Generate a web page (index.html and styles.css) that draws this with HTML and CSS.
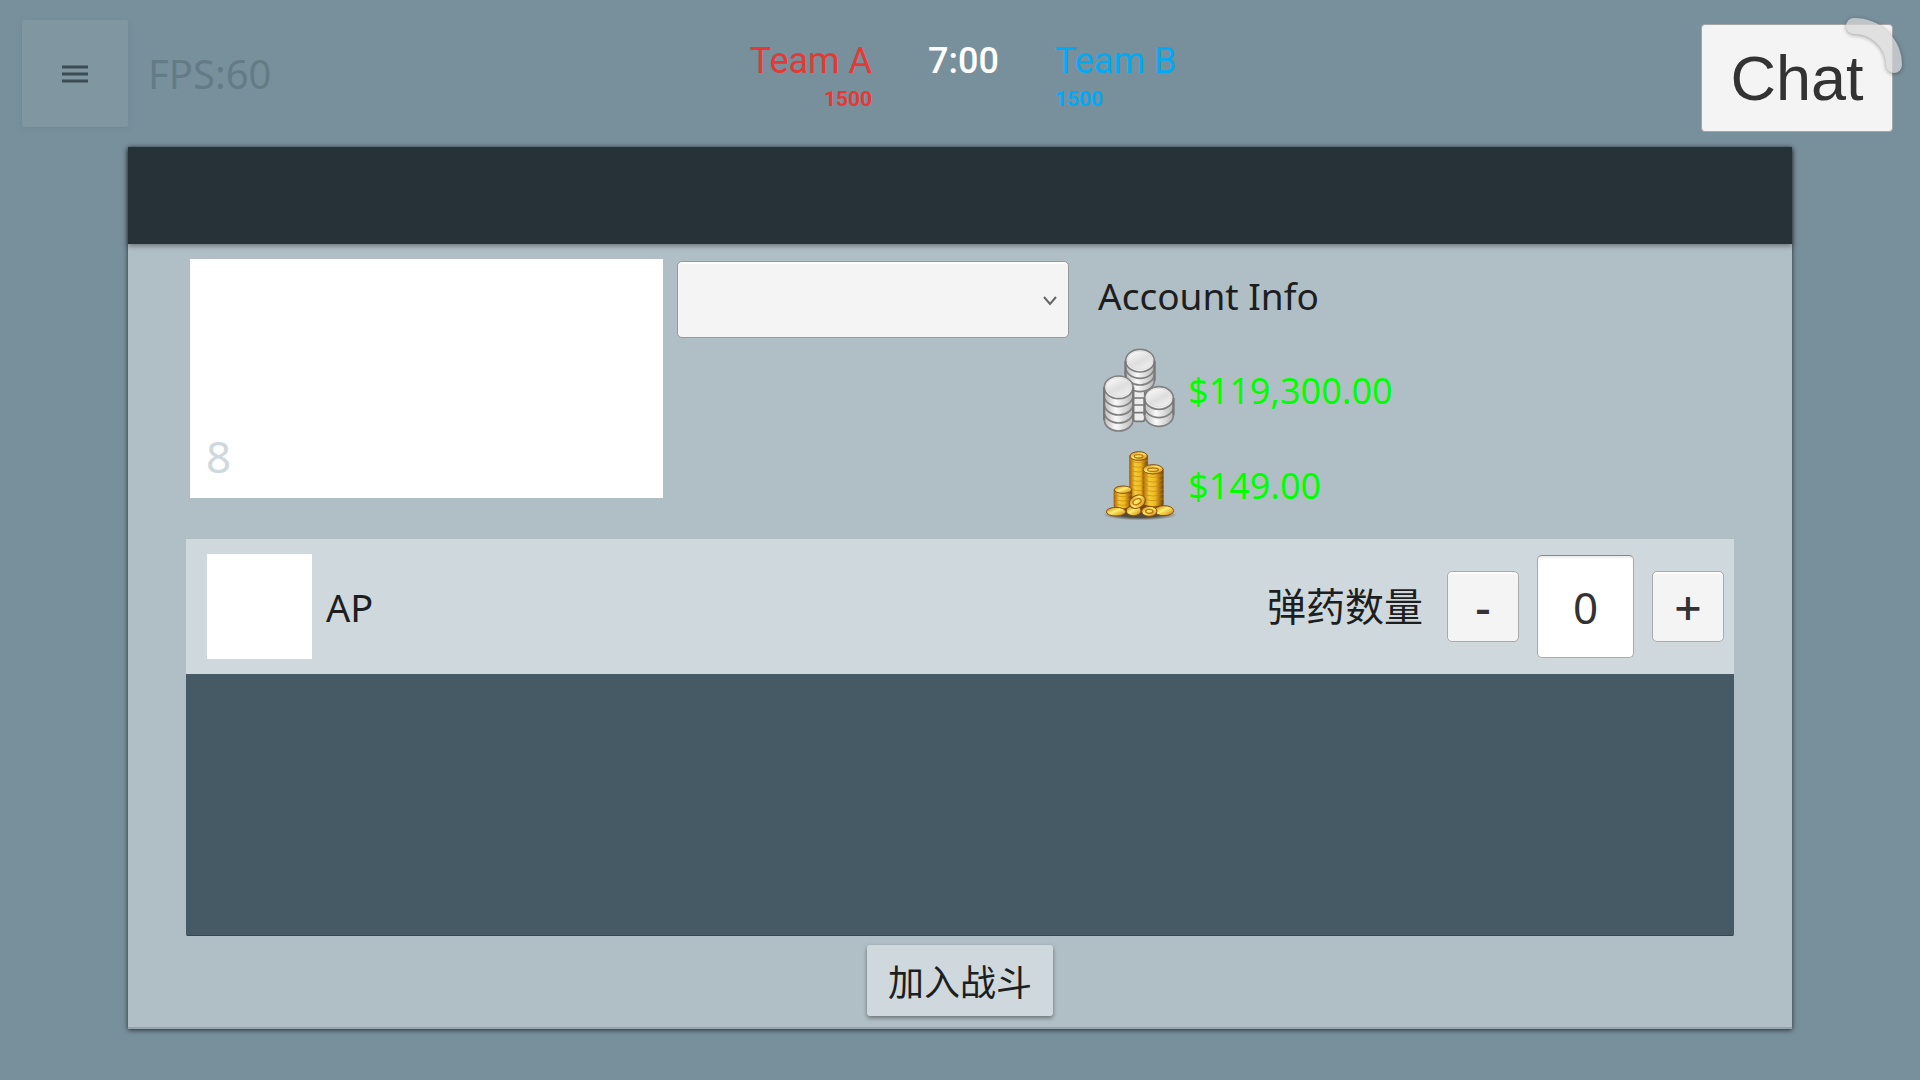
FILE: index.html
```html
<!DOCTYPE html>
<html lang="zh-CN">
<head>
<meta charset="utf-8">
<meta name="viewport" content="width=device-width, initial-scale=1">
<title>Team A / Team B</title>
<link rel="stylesheet" href="styles.css">
</head>
<body>
<header class="hud">
  <div class="hud-left">
    <button class="menu-button" type="button" aria-label="Menu">
      <svg class="menu-icon" viewBox="0 0 26 18" aria-hidden="true"><path d="M0 2h26M0 9h26M0 16h26"/></svg>
    </button>
    <span class="fps">FPS:60</span>
  </div>
  <div class="scoreboard">
    <div class="team team-a"><span class="team-name">Team A</span><span class="score">1500</span></div>
    <time class="timer">7:00</time>
    <div class="team team-b"><span class="team-name">Team B</span><span class="score">1500</span></div>
  </div>
  <div class="hud-right">
    <button class="chat-button" type="button">Chat
      <svg class="chat-arc" viewBox="0 0 64 64" aria-hidden="true"><path d="M12 12A40 39 0 0 1 52 51"/></svg>
    </button>
  </div>
</header>

<main class="panel">
  <div class="panel-head"></div>
  <div class="panel-body">
    <section class="overview">
      <div class="preview"><span>8</span></div>
      <div class="select-wrap">
        <select class="vehicle-select" aria-label="Vehicle"><option></option></select>
        <svg class="chevron" viewBox="0 0 14 10" aria-hidden="true"><path d="M1 1l6 7 6-7"/></svg>
      </div>
      <div class="account">
        <h1 class="account-title">Account Info</h1>
        <div class="balance">
          <svg class="silver" viewBox="60 50 228 264" aria-hidden="true">
            <defs>
              <linearGradient id="silver-rim"><stop offset="0" stop-color="#bdbdbd"/><stop offset=".4" stop-color="#fafafa"/><stop offset="1" stop-color="#b8b8b8"/></linearGradient>
              <linearGradient id="silver-top" x1="0" y1="0" x2=".7" y2="1"><stop offset="0" stop-color="#fff"/><stop offset=".6" stop-color="#dedede"/><stop offset="1" stop-color="#efefef"/></linearGradient>
              <g id="disc"><ellipse rx="43" ry="33" fill="url(#silver-rim)" stroke="#808080" stroke-width="5"/></g>
              <g id="lid"><ellipse rx="43" ry="34" fill="#f2f2f2" stroke="#808080" stroke-width="5"/><ellipse cy="-1" rx="38" ry="28" fill="url(#silver-top)" stroke="#d4d4d4" stroke-width="2"/></g>
            </defs>
            <rect x="160" y="170" width="34" height="106" rx="8" fill="#ededed" stroke="#777" stroke-width="5"/>
            <path d="M160 206h34M160 227h34M160 250h34" stroke="#777" stroke-width="5"/>
            <use href="#disc" x="180" y="154"/><use href="#disc" x="180" y="134"/><use href="#disc" x="180" y="114"/><use href="#lid" x="180" y="94"/>
            <path d="M136 94v60M224 94v60" stroke="#777" stroke-width="6"/>
            <use href="#disc" x="116" y="272"/><use href="#disc" x="116" y="248"/><use href="#disc" x="116" y="224"/><use href="#disc" x="116" y="199"/><use href="#lid" x="116" y="174"/>
            <path d="M72 174v98M160 174v98" stroke="#777" stroke-width="6"/>
            <use href="#disc" x="237" y="258"/><use href="#disc" x="237" y="232"/><use href="#lid" x="237" y="206"/>
            <path d="M193 206v52M281 206v52" stroke="#777" stroke-width="6"/>
          </svg>
          <span>$119,300.00</span>
        </div>
        <div class="balance">
          <svg class="gold" viewBox="60 366 228 216" aria-hidden="true">
            <defs>
              <linearGradient id="gold-side"><stop offset="0" stop-color="#a96308"/><stop offset=".3" stop-color="#f5cc35"/><stop offset=".6" stop-color="#edb91f"/><stop offset="1" stop-color="#74400b"/></linearGradient>
              <linearGradient id="gold-top" x1="0" y1="0" x2="1" y2="1"><stop offset="0" stop-color="#b96f0d"/><stop offset=".45" stop-color="#fff06b"/><stop offset="1" stop-color="#c87a0b"/></linearGradient>
              <radialGradient id="gold-shadow"><stop offset=".5" stop-color="#39301b" stop-opacity=".8"/><stop offset="1" stop-color="#39301b" stop-opacity="0"/></radialGradient>
            </defs>
            <ellipse cx="180" cy="563" rx="112" ry="17" fill="url(#gold-shadow)"/>
            <path d="M130 520h120v40H130z" fill="#6d420f"/>
            <g stroke="#97580d" stroke-width="2">
              <path d="M149 386v126q27 14 54 0V386z" fill="url(#gold-side)"/>
              <path d="M189 427v105q30 14 61 0V427z" fill="url(#gold-side)"/>
              <path d="M102 488v50q26 14 53 0v-50z" fill="url(#gold-side)"/>
            </g>
            <g fill="none" stroke="#c8860f" stroke-width="2">
              <path d="M149 400q27 14 54 0M149 414q27 14 54 0M149 428q27 14 54 0M149 442q27 14 54 0M149 456q27 14 54 0M149 470q27 14 54 0M149 484q27 14 54 0"/>
              <path d="M189 444q30 14 61 0M189 458q30 14 61 0M189 472q30 14 61 0M189 486q30 14 61 0M189 500q30 14 61 0M189 514q30 14 61 0"/>
              <path d="M102 502q26 14 53 0M102 515q26 14 53 0M102 528q26 14 53 0"/>
            </g>
            <g fill="url(#gold-top)" stroke="#8c4e0b" stroke-width="3">
              <ellipse cx="176" cy="387" rx="26" ry="13"/><ellipse cx="219" cy="427" rx="30" ry="14"/><ellipse cx="129" cy="488" rx="26" ry="11"/>
              <ellipse cx="108" cy="554" rx="29" ry="13"/><ellipse cx="252" cy="551" rx="29" ry="15"/>
              <ellipse cx="208" cy="553" rx="23" ry="15"/><ellipse cx="161" cy="551" rx="22" ry="15"/>
              <ellipse cx="172" cy="524" rx="25" ry="19" transform="rotate(-25 172 524)"/>
            </g>
            <g fill="none" stroke="#bd740e" stroke-width="4"><ellipse cx="176" cy="388" rx="13" ry="5"/><ellipse cx="219" cy="428" rx="16" ry="5"/><ellipse cx="171" cy="524" rx="13" ry="8" transform="rotate(-25 171 524)"/><ellipse cx="208" cy="553" rx="11" ry="6"/></g>
          </svg>
          <span>$149.00</span>
        </div>
      </div>
    </section>

    <section class="ammo-list">
      <div class="ammo-row">
        <div class="ammo-icon"></div>
        <span class="ammo-name">AP</span>
        <label class="ammo-label" for="ammo-count">弹药数量</label>
        <button class="step-button" type="button">-</button>
        <input class="ammo-count" id="ammo-count" type="text" inputmode="numeric" value="0">
        <button class="step-button" type="button">+</button>
      </div>
    </section>
    <button class="join-button" type="button">加入战斗</button>
  </div>
</main>
</body>
</html>
```
FILE: styles.css
```css
* { box-sizing: border-box; }

body {
  display: flex;
  flex-direction: column;
  min-height: 100vh;
  margin: 0;
  padding-bottom: 51px;
  background: #78909c;
  color: #1c1e1f;
  font-family: "Noto Sans", "Noto Sans CJK SC", sans-serif;
  font-size: 36px;
}

button, select, input { margin: 0; font-family: inherit; color: inherit; }

/* Top bar */
.hud {
  display: grid;
  grid-template-columns: 1fr auto 1fr;
  align-items: start;
  padding: 20px 22px 0;
  min-height: 147px;
}

.hud-left { display: flex; align-items: center; gap: 20px; }

.menu-button {
  display: grid;
  place-items: center;
  width: 106px;
  height: 107px;
  padding: 0;
  border: 0;
  border-radius: 2px;
  background: #8096a0;
  box-shadow: 0 2px 6px rgba(80, 110, 125, .2);
}

.menu-icon { width: 26px; height: 18px; stroke: #3c4c54; stroke-width: 3; }

.fps { color: #647b86; font-size: 40px; line-height: 54px; }

.scoreboard {
  display: flex;
  align-items: flex-start;
  gap: 56px;
  padding: 21px 0 0 6px;
  font-family: Roboto, sans-serif;
}

.team { display: flex; flex-direction: column; gap: 6px; }
.team-name { font-size: 36px; line-height: 40px; }
.score { font-size: 21px; line-height: 24px; font-weight: 700; }
.team-a { align-items: flex-end; color: #e53935; }
.team-b { align-items: flex-start; color: #03a9f4; }
.timer { color: #fff; font-size: 36px; line-height: 40px; font-weight: 500; }

.hud-right { display: flex; justify-content: flex-end; padding: 4px 5px 0 0; }

.chat-button {
  position: relative;
  width: 192px;
  height: 108px;
  padding: 0;
  border: 1px solid #a5a5a5;
  border-radius: 4px;
  background: #f4f4f4;
  color: #333;
  font-family: "Liberation Sans", sans-serif;
  font-size: 63px;
}

.chat-arc {
  position: absolute;
  top: -11px;
  right: -14px;
  width: 64px;
  height: 64px;
  overflow: visible;
  fill: none;
  stroke: #d9d9d9;
  stroke-width: 16;
  stroke-linecap: round;
  opacity: .72;
  filter: drop-shadow(0 1px 2px rgba(0, 0, 0, .5));
}

/* Main panel */
.panel {
  flex: 1;
  display: flex;
  flex-direction: column;
  margin: 0 128px;
  border-bottom: 2px solid #98a4ab;
  background: #b0bec5;
  box-shadow: 0 1px 5px rgba(0, 0, 0, .7);
}

.panel-head {
  min-height: 97px;
  background: #263238;
  box-shadow: 0 2px 5px rgba(0, 0, 0, .4);
}

.panel-body {
  flex: 1;
  display: flex;
  flex-direction: column;
  padding: 15px 58px 11px;
}

.overview {
  display: grid;
  grid-template-columns: 473fr 406fr 665fr;
  align-items: start;
  min-height: 280px;
  padding-left: 4px;
}

.preview {
  display: flex;
  align-items: flex-end;
  height: 239px;
  padding: 0 16px 14px;
  background: #fff;
  color: #cfd8dc;
  font-size: 44px;
  line-height: 56px;
}

.select-wrap { position: relative; margin: 2px 0 0 14px; }

.vehicle-select {
  display: block;
  width: 100%;
  height: 77px;
  appearance: none;
  border: 1px solid #999;
  border-radius: 5px;
  background: #f4f4f4;
  box-shadow: inset 0 2px #fff;
}

.chevron {
  position: absolute;
  top: 35px;
  right: 12px;
  width: 14px;
  height: 10px;
  fill: none;
  stroke: #666;
  stroke-width: 2;
  pointer-events: none;
}

.account { padding-left: 29px; }

.account-title {
  margin: 0 0 14px;
  font-size: 37px;
  font-weight: 400;
  line-height: 74px;
}

.balance {
  display: flex;
  align-items: center;
  gap: 12px;
  height: 86px;
  margin: 0 0 9px 2px;
  color: #0f0;
  font-size: 36px;
}

.silver { width: 76px; height: 88px; }
.gold { width: 76px; height: 72px; }

.ammo-list {
  flex: 1;
  border-bottom: 1px solid #37474f;
  border-radius: 0 0 2px 2px;
  background: #455a64;
}

.ammo-row {
  display: flex;
  align-items: center;
  min-height: 135px;
  padding: 0 10px 0 21px;
  background: #cfd8dc;
}

.ammo-icon { width: 105px; height: 105px; background: #fff; }
.ammo-name { flex: 1; margin-left: 14px; font-size: 38px; }
.ammo-label { margin-right: 24px; font-size: 39px; line-height: 52px; padding-bottom: 2px; }

.step-button {
  width: 72px;
  height: 71px;
  padding: 0;
  border: 1px solid #aaa;
  border-radius: 5px;
  background: #f4f4f4;
  box-shadow: inset 0 2px #fff;
  color: #333;
  font-size: 48px;
  font-weight: 500;
  line-height: 68px;
}

.ammo-count {
  width: 97px;
  height: 103px;
  margin: 0 18px;
  padding: 0;
  border: 1px solid #aaa;
  border-top-color: #888;
  border-radius: 5px;
  background: #fff;
  box-shadow: inset 0 2px 2px #eee;
  color: #333;
  font-size: 44px;
  text-align: center;
}

.join-button {
  align-self: center;
  width: 186px;
  height: 71px;
  margin-top: 9px;
  padding: 0;
  border: 0;
  border-radius: 3px;
  background: #cfd8dc;
  box-shadow: 0 2px 4px rgba(0, 0, 0, .4);
  font-size: 36px;
}
```
